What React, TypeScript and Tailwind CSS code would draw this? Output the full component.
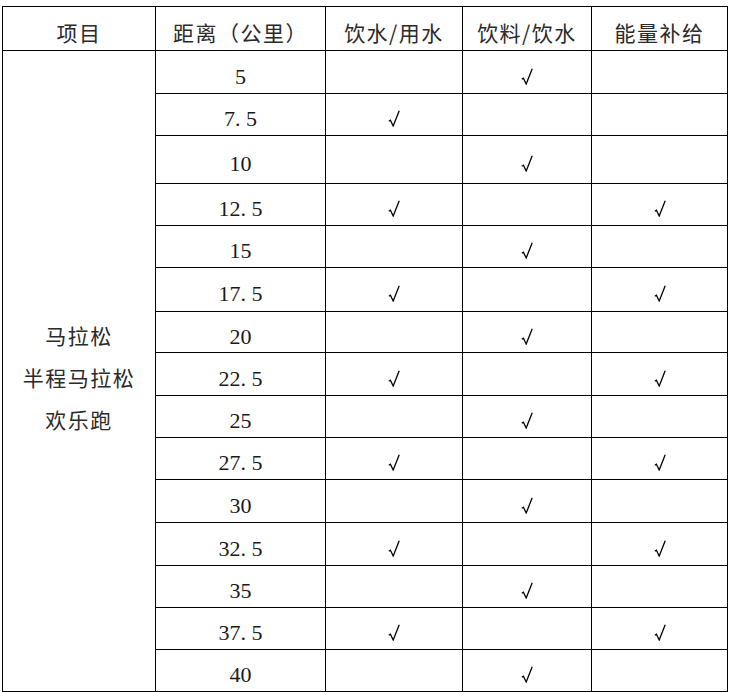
import React from "react";

type Row = {
  km: string;
  water: boolean;
  drink: boolean;
  energy: boolean;
};

const rows: Row[] = [
  { km: "5", water: false, drink: true, energy: false },
  { km: "7.5", water: true, drink: false, energy: false },
  { km: "10", water: false, drink: true, energy: false },
  { km: "12.5", water: true, drink: false, energy: true },
  { km: "15", water: false, drink: true, energy: false },
  { km: "17.5", water: true, drink: false, energy: true },
  { km: "20", water: false, drink: true, energy: false },
  { km: "22.5", water: true, drink: false, energy: true },
  { km: "25", water: false, drink: true, energy: false },
  { km: "27.5", water: true, drink: false, energy: true },
  { km: "30", water: false, drink: true, energy: false },
  { km: "32.5", water: true, drink: false, energy: true },
  { km: "35", water: false, drink: true, energy: false },
  { km: "37.5", water: true, drink: false, energy: true },
  { km: "40", water: false, drink: true, energy: false },
];

const cell = "flex items-center justify-center border-r border-b border-black pt-[8px]";
const head = "flex items-center justify-center border-r border-b border-black pt-[9px] tracking-[1.5px] text-[#2a2a2a]";

function Check() {
  return (
    <svg width="12" height="17" viewBox="0 0 12 17" fill="none">
      <path d="M0.8 11.2 L2.4 10.2 L5.2 16 L11.2 0.8" stroke="#000" strokeWidth="1.3" strokeLinejoin="miter" />
    </svg>
  );
}

function Km({ value }: { value: string }) {
  const parts = value.split(".");
  if (parts.length === 1) return <span>{value}</span>;
  return (
    <span>
      {parts[0]}
      <span className="mr-[0.25em]">.</span>
      {parts[1]}
    </span>
  );
}

export default function App() {
  return (
    <div className="min-h-screen bg-white pt-[6px] pl-[2px] text-[#1a1a1a]" style={{ width: 729, height: 692 }}>
      <div
        className="grid grid-cols-[153px_170px_137px_129px_136px] grid-rows-[44px_43px_42px_48px_42px_42px_44px_41px_43px_42px_42px_43px_43px_42px_42px_42px] border-t border-l border-black text-[21px] w-max"
        style={{ fontFamily: '"Noto Sans CJK SC", sans-serif' }}
      >
        <div className={head}>项目</div>
        <div className={head}>距离（公里）</div>
        <div className={head}>饮水/用水</div>
        <div className={head}>饮料/饮水</div>
        <div className={head}>能量补给</div>

        <div className="row-span-15 flex flex-col items-center justify-center border-r border-b border-black pt-[12px] leading-[42px] tracking-[1.5px] text-[#2a2a2a]">
          <span>马拉松</span>
          <span>半程马拉松</span>
          <span>欢乐跑</span>
        </div>

        {rows.map((r) => (
          <React.Fragment key={r.km}>
            <div className={cell + " text-[22px]"} style={{ fontFamily: '"Liberation Serif", serif' }}>
              <Km value={r.km} />
            </div>
            <div className={cell}>{r.water ? <Check /> : null}</div>
            <div className={cell}>{r.drink ? <Check /> : null}</div>
            <div className={cell}>{r.energy ? <Check /> : null}</div>
          </React.Fragment>
        ))}
      </div>
    </div>
  );
}
